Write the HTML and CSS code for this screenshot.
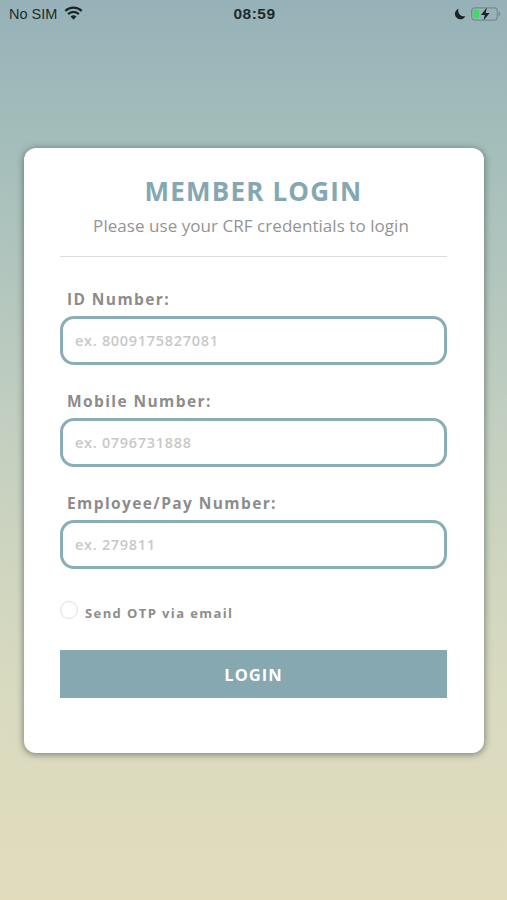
FILE: index.html
```html
<!DOCTYPE html>
<html lang="en">
<head>
<meta charset="utf-8">
<title>Member Login</title>
<link rel="stylesheet" href="styles.css">
</head>
<body>
<div class="screen">
  <header class="status">
    <div class="status-left">
      <span>No SIM</span>
      <svg class="wifi" viewBox="0 0 18 13" width="19" height="14"><path d="M9 13 6.2 9.9a4 4 0 0 1 5.6 0Z" fill="#1c2426"/><path d="M3.9 7.6a7.3 7.3 0 0 1 10.2 0" fill="none" stroke="#1c2426" stroke-width="2.1"/><path d="M1.2 4.6a11.2 11.2 0 0 1 15.6 0" fill="none" stroke="#1c2426" stroke-width="2.1"/></svg>
    </div>
    <div class="status-time">08:59</div>
    <div class="status-right">
      <svg class="moon" viewBox="0 0 12 12" width="12" height="12"><path d="M4.6.8a5.4 5.4 0 1 0 6.7 7.3A5.6 5.6 0 0 1 4.6.8Z" fill="#1c2426"/></svg>
      <svg class="battery" viewBox="0 0 29 13" width="30" height="14"><rect x=".6" y=".6" width="24.8" height="11.8" rx="3" fill="none" stroke="#7b8b8e" stroke-width="1.2"/><rect x="2.3" y="2.3" width="5.4" height="8.4" rx="1" fill="#3ddb68"/><path d="M26.6 4.4c1.2.3 1.8 1 1.8 2.1s-.6 1.8-1.8 2.1Z" fill="#7b8b8e"/><path d="M15.3.2 9.6 7.4h3.7l-1.2 5.4 5.9-7.3h-3.8Z" fill="#1c2426"/></svg>
    </div>
  </header>
  <main class="card">
    <h1 class="title">MEMBER LOGIN</h1>
    <p class="subtitle">Please use your CRF credentials to login</p>
    <hr class="divider">
    <form class="form">
      <div class="field">
        <label class="label">ID Number:</label>
        <div class="input">ex. 8009175827081</div>
      </div>
      <div class="field">
        <label class="label">Mobile Number:</label>
        <div class="input">ex. 0796731888</div>
      </div>
      <div class="field">
        <label class="label">Employee/Pay Number:</label>
        <div class="input">ex. 279811</div>
      </div>
      <div class="otp">
        <span class="radio"></span>
        <span class="otp-text">Send OTP via email</span>
      </div>
      <div class="button">LOGIN</div>
    </form>
  </main>
</div>
</body>
</html>
```

FILE: styles.css
```css
* { box-sizing: border-box; }
html, body { margin: 0; padding: 0; }
body { width: 507px; height: 900px; overflow: hidden; font-family: "Open Sans", sans-serif; }
.screen {
  width: 507px; height: 900px; padding-top: 0;
  background: linear-gradient(180deg, #96b2b8 0%, #a3bdbb 15%, #c3cfc0 48%, #d8dabf 75%, #e2dcbd 100%);
}
.status {
  height: 28px; padding: 0 6px 0 9px;
  display: grid; grid-template-columns: 1fr auto 1fr; align-items: center;
  font-family: "Liberation Sans", sans-serif; font-size: 14.5px; color: #1f2a2d;
}
.status-left { display: flex; align-items: center; gap: 7px; }
.wifi { margin-top: -3px; }
.status-time { font-weight: 700; font-size: 15.5px; letter-spacing: .5px; margin-left: -1px; }
.status-right { display: flex; justify-content: flex-end; align-items: center; gap: 5px; }
.card {
  margin: 120px 23px 0 24px; height: 605px; padding: 26px 37px 0 36px;
  background: #fff; border-radius: 12px;
  box-shadow: 0 1px 6px 1px rgba(70, 85, 80, .6);
}
.title {
  margin: 0; text-align: center; font-size: 26px; line-height: 34px; font-weight: 700;
  color: #84a7b1; letter-spacing: 1.2px;
}
.subtitle {
  margin: 7px 0 0; padding-right: 5px; text-align: center; font-size: 17px; line-height: 22px;
  color: #949494; letter-spacing: .05px;
}
.divider { margin: 19px 0 0; border: 0; height: 1px; background: #dcdcdc; }
.form { display: flex; flex-direction: column; }
.field { display: flex; flex-direction: column; margin-top: 32px; }
.label {
  padding-left: 7px; font-size: 15.5px; line-height: 20px; font-weight: 700;
  color: #8c8c8c; letter-spacing: 1.4px; margin-bottom: 7px;
}
.field + .field { margin-top: 26px; }
.input {
  height: 49px; padding-left: 12px; display: flex; align-items: center;
  border: 3px solid #8badb6; border-radius: 14px;
  font-size: 14.5px; font-weight: 600; color: #c8c8c8; letter-spacing: .7px;
}
.otp { display: flex; align-items: center; gap: 7px; margin-top: 33px; height: 20px; }
.radio { width: 18px; height: 18px; border: 1.5px solid #dedede; border-radius: 50%; margin-top: -5px; }
.otp-text { font-size: 13px; font-weight: 700; color: #8d8d8d; letter-spacing: 1.4px; margin-top: 2px; }
.button {
  margin-top: 28px; height: 48px; display: flex; align-items: center; justify-content: center;
  background: #85a8b1; color: #fff; font-size: 16.5px; font-weight: 700; letter-spacing: 1px;
}
```
